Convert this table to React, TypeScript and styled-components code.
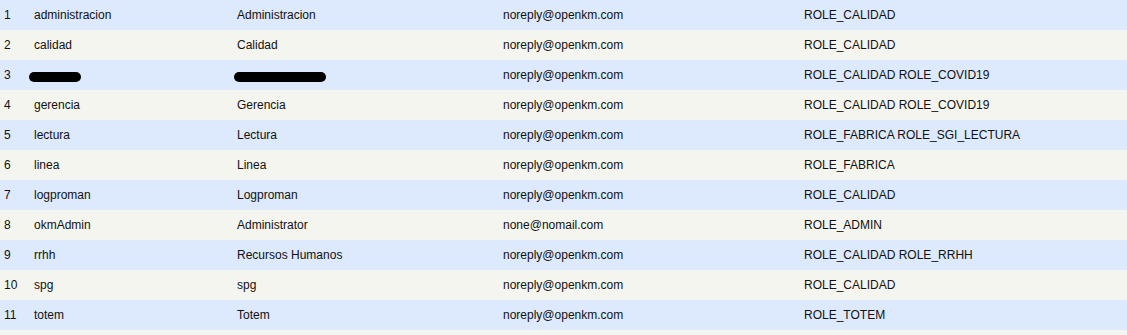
import React from 'react';
import styled, { createGlobalStyle } from 'styled-components';

const GlobalStyle = createGlobalStyle`
  body {
    margin: 0;
    background: #f5f5ef;
    font-family: "Liberation Sans", Arial, sans-serif;
  }
`;

const Table = styled.div`
  width: 1127px;
  display: flex;
  flex-direction: column;
`;

const Row = styled.div<{ $odd: boolean }>`
  display: grid;
  grid-template-columns: 30px 203px 266px 301px 1fr;
  height: 30px;
  align-items: center;
  background: ${(p) => (p.$odd ? '#dde9fc' : '#f5f5ef')};
`;

const Cell = styled.div`
  padding-left: 4px;
  font-size: 12px;
  color: #111;
  white-space: nowrap;
`;

const Redacted = styled.span<{ $w: number; $shift: number }>`
  display: inline-block;
  width: ${(p) => p.$w}px;
  height: 10px;
  margin-left: ${(p) => p.$shift}px;
  margin-top: 2px;
  background: #000;
  border-radius: 5px;
  vertical-align: middle;
`;

type User = { id: string; name: string; email: string; roles: string; hidden?: boolean };

const users: User[] = [
  { id: 'administracion', name: 'Administracion', email: 'noreply@openkm.com', roles: 'ROLE_CALIDAD' },
  { id: 'calidad', name: 'Calidad', email: 'noreply@openkm.com', roles: 'ROLE_CALIDAD' },
  { id: '', name: '', email: 'noreply@openkm.com', roles: 'ROLE_CALIDAD ROLE_COVID19', hidden: true },
  { id: 'gerencia', name: 'Gerencia', email: 'noreply@openkm.com', roles: 'ROLE_CALIDAD ROLE_COVID19' },
  { id: 'lectura', name: 'Lectura', email: 'noreply@openkm.com', roles: 'ROLE_FABRICA ROLE_SGI_LECTURA' },
  { id: 'linea', name: 'Linea', email: 'noreply@openkm.com', roles: 'ROLE_FABRICA' },
  { id: 'logproman', name: 'Logproman', email: 'noreply@openkm.com', roles: 'ROLE_CALIDAD' },
  { id: 'okmAdmin', name: 'Administrator', email: 'none@nomail.com', roles: 'ROLE_ADMIN' },
  { id: 'rrhh', name: 'Recursos Humanos', email: 'noreply@openkm.com', roles: 'ROLE_CALIDAD ROLE_RRHH' },
  { id: 'spg', name: 'spg', email: 'noreply@openkm.com', roles: 'ROLE_CALIDAD' },
  { id: 'totem', name: 'Totem', email: 'noreply@openkm.com', roles: 'ROLE_TOTEM' },
];

export default function App() {
  return (
    <>
      <GlobalStyle />
      <Table>
        {users.map((u, i) => (
          <Row key={i} $odd={i % 2 === 0}>
            <Cell>{i + 1}</Cell>
            <Cell>{u.hidden ? <Redacted $w={52} $shift={-5} /> : u.id}</Cell>
            <Cell>{u.hidden ? <Redacted $w={92} $shift={-3} /> : u.name}</Cell>
            <Cell>{u.email}</Cell>
            <Cell>{u.roles}</Cell>
          </Row>
        ))}
      </Table>
    </>
  );
}
